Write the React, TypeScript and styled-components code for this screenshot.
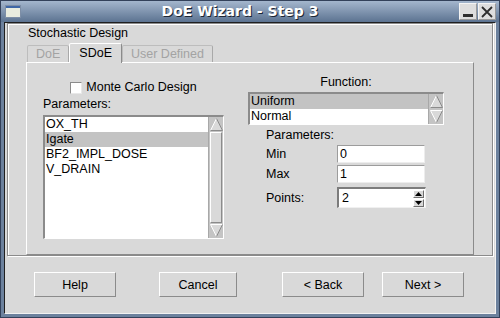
import React from 'react';
import styled, { createGlobalStyle } from 'styled-components';

const palette = {
    face: '#d9d9d9',
    light: '#ffffff',
    shadow: '#8b8b8b',
    dark: '#3a3a3a',
    select: '#c3c3c3',
    disabled: '#a3a3a3',
    trough: '#c4c4c4',
    frame: '#6c819d',
};

const GlobalStyle = createGlobalStyle`
    html,
    body {
        margin: 0;
        padding: 0;
        background: ${palette.frame};
    }

    body {
        font-family: 'Liberation Sans', Arial, sans-serif;
        font-size: 12.5px;
        color: #000;
    }

    * {
        box-sizing: border-box;
    }
`;

const Window = styled.div`
    width: 500px;
    height: 318px;
    display: flex;
    flex-direction: column;
    background: ${palette.frame};
    border: 1px solid #33415a;
`;

const TitleBar = styled.div`
    height: 21px;
    flex: none;
    display: flex;
    align-items: center;
    padding: 0 3px 0 4px;
    background: linear-gradient(#a4b6cd, #5c7391);
`;

const Title = styled.div`
    flex: 1;
    text-align: center;
    font-family: 'DejaVu Sans', sans-serif;
    font-weight: bold;
    font-size: 14px;
    line-height: 17px;
    color: #fff;
    text-shadow: 1px 1px 0 #1d2634;
`;

const WinButton = styled.div<{ $ml?: number }>`
    width: 18px;
    height: 17px;
    margin-left: ${p => p.$ml ?? 0}px;
    background: #dedede;
    border: 1px solid;
    border-color: #f4f4f4 #9a9a9a #9a9a9a #f4f4f4;
    display: flex;
    align-items: center;
    justify-content: center;
`;

const Client = styled.div`
    flex: 1;
    margin: 0 3px 3px;
    background: ${palette.face};
    border: 1px solid;
    border-color: #1f1f1f #f2f2f2 #f2f2f2 #1f1f1f;
    display: flex;
    flex-direction: column;
`;

const Group = styled.div`
    height: 233px;
    margin: 0 2px;
    padding: 2px 18px 0 18px;
    border: 1px solid ${palette.shadow};
    box-shadow: 1px 1px 0 ${palette.light}, inset 1px 1px 0 ${palette.light};
    display: flex;
    flex-direction: column;
`;

const GroupLabel = styled.div`
    line-height: 15px;
    padding-left: 2px;
`;

const TabRow = styled.div`
    height: 21px;
    display: flex;
    align-items: flex-end;
    padding-left: 1px;
`;

const Tab = styled.div<{ $active?: boolean }>`
    position: relative;
    z-index: ${p => (p.$active ? 1 : 0)};
    height: ${p => (p.$active ? 20 : 17)}px;
    margin-bottom: ${p => (p.$active ? -1 : 0)}px;
    padding: ${p => (p.$active ? '2px 9px 0' : '1px 8px 0')};
    line-height: 15px;
    color: ${p => (p.$active ? '#000' : palette.disabled)};
    background: ${palette.face};
    border: 1px solid;
    border-bottom: none;
    border-color: ${p =>
        p.$active
            ? `${palette.light} ${palette.shadow} transparent ${palette.light}`
            : `#bdbdbd #a9a9a9 transparent #bdbdbd`};
    border-radius: 2px 2px 0 0;
`;

const Panel = styled.div`
    flex: 1;
    border: 1px solid;
    border-color: ${palette.light} ${palette.shadow} ${palette.shadow} ${palette.light};
    padding: 12px 0 0 16px;
    display: grid;
    grid-template-columns: 181px 196px;
    column-gap: 24px;
    align-items: start;
`;

const Column = styled.div<{ $top?: number }>`
    display: flex;
    flex-direction: column;
    padding-top: ${p => p.$top ?? 0}px;
`;

const CheckRow = styled.label`
    height: 15px;
    display: flex;
    align-items: center;
    justify-content: center;
    gap: 4px;
    line-height: 15px;
`;

const CheckBox = styled.span`
    width: 12px;
    height: 12px;
    background: #fff;
    border: 1px solid;
    border-color: ${palette.shadow} #e8e8e8 #e8e8e8 ${palette.shadow};
`;

const Label = styled.div<{ $mt?: number; $indent?: number; $center?: boolean }>`
    line-height: 15px;
    margin-top: ${p => p.$mt ?? 0}px;
    padding-left: ${p => p.$indent ?? 0}px;
    text-align: ${p => (p.$center ? 'center' : 'left')};
`;

const ListBox = styled.div<{ $h: number; $mt?: number }>`
    height: ${p => p.$h}px;
    margin-top: ${p => p.$mt ?? 0}px;
    display: flex;
    border-style: solid;
    border-width: 2px 1px 1px 2px;
    border-color: ${palette.shadow} ${palette.light} ${palette.light} ${palette.shadow};
    background: #fff;
`;

const Items = styled.div`
    flex: 1;
    background: #fff;
`;

const Item = styled.div<{ $selected?: boolean }>`
    height: 15px;
    line-height: 15px;
    padding-left: 1px;
    white-space: nowrap;
    background: ${p => (p.$selected ? palette.select : '#fff')};
`;

const ScrollBar = styled.div`
    width: 15px;
    display: flex;
    flex-direction: column;
    background: ${palette.trough};
    border-left: 1px solid #a8a8a8;
`;

const Arrow = styled.div`
    height: 15px;
    flex: none;
    display: flex;
    align-items: center;
    justify-content: center;
`;

const Thumb = styled.div`
    flex: 1;
    margin: 0 1px;
    background: ${palette.face};
    border: 1px solid;
    border-color: ${palette.light} ${palette.shadow} ${palette.shadow} ${palette.light};
`;

const Divider = styled.div`
    height: 1px;
    margin: 0 1px;
    background: ${palette.light};
`;

const Form = styled.div`
    margin-top: 2px;
    padding-left: 18px;
    display: grid;
    grid-template-columns: 71px 89px;
    grid-template-rows: 18px 18px 25px;
    row-gap: 2px;
    align-items: center;
`;

const Field = styled.div`
    width: 88px;
    height: 18px;
    padding-left: 2px;
    line-height: 16px;
    background: #fff;
    border: 1px solid;
    border-color: #9c9c9c #ededed #ededed #9c9c9c;
`;

const Spin = styled.div`
    width: 89px;
    height: 21px;
    display: flex;
    align-items: center;
    background: #fff;
    border-style: solid;
    border-width: 2px 1px 1px 2px;
    border-color: #7c7c7c #f0f0f0 #f0f0f0 #7c7c7c;
`;

const SpinValue = styled.div`
    flex: 1;
    padding-left: 3px;
    line-height: 16px;
`;

const SpinButtons = styled.div`
    width: 11px;
    margin-right: 1px;
    display: flex;
    flex-direction: column;
    gap: 1px;
`;

const SpinButton = styled.div`
    height: 8px;
    display: flex;
    align-items: center;
    justify-content: center;
    background: ${palette.face};
    border: 1px solid;
    border-color: ${palette.light} #6e6e6e #6e6e6e ${palette.light};
`;

const ButtonRow = styled.div`
    display: flex;
    padding: 16px 0 0 29px;
`;

const PushButton = styled.div<{ $w: number; $ml?: number }>`
    width: ${p => p.$w}px;
    height: 25px;
    margin-left: ${p => p.$ml ?? 0}px;
    display: flex;
    align-items: center;
    justify-content: center;
    background: ${palette.face};
    border: 1px solid;
    border-color: ${palette.light} ${palette.shadow} ${palette.shadow} ${palette.light};
`;

// hollow bevelled triangle used by the Motif-like scroll bars
const ScrollArrow = ({ down }: { down?: boolean }) => (
    <svg width="13" height="13" viewBox="0 0 13 13">
        {down ? (
            <>
                <polygon points="0.5,0.5 12.5,0.5 6.5,12.5" fill={palette.face} />
                <line x1="0.5" y1="0.5" x2="12.5" y2="0.5" stroke={palette.light} />
                <line x1="0.5" y1="0.5" x2="6.5" y2="12.5" stroke={palette.light} />
                <line x1="12.5" y1="0.5" x2="6.5" y2="12.5" stroke={palette.shadow} />
            </>
        ) : (
            <>
                <polygon points="6.5,0.5 12.5,12.5 0.5,12.5" fill={palette.face} />
                <line x1="6.5" y1="0.5" x2="0.5" y2="12.5" stroke={palette.light} />
                <line x1="6.5" y1="0.5" x2="12.5" y2="12.5" stroke={palette.shadow} />
                <line x1="0.5" y1="12.5" x2="12.5" y2="12.5" stroke={palette.shadow} />
            </>
        )}
    </svg>
);

const SpinArrow = ({ down }: { down?: boolean }) => (
    <svg width="7" height="4" viewBox="0 0 7 4">
        <polygon points={down ? '0,0 7,0 3.5,4' : '3.5,0 7,4 0,4'} fill="#000" />
    </svg>
);

const parameters = ['OX_TH', 'Igate', 'BF2_IMPL_DOSE', 'V_DRAIN'];
const functions = ['Uniform', 'Normal'];

const App: React.FC = () => {
    return (
        <>
            <GlobalStyle />
            <Window>
                <TitleBar>
                    <svg width="16" height="13" viewBox="0 0 16 13">
                        <rect x="0.5" y="0.5" width="15" height="12" fill="#e9ecdf" stroke="#7d8ea6" />
                        <rect x="1" y="1" width="14" height="2" fill="#3f67a6" />
                    </svg>
                    <Title>DoE Wizard - Step 3</Title>
                    <WinButton>
                        <svg width="10" height="12" viewBox="0 0 10 12">
                            <rect x="0" y="8" width="10" height="3" fill="#2e2e2e" />
                        </svg>
                    </WinButton>
                    <WinButton $ml={1}>
                        <svg width="12" height="12" viewBox="0 0 12 12">
                            <path d="M1 1 L11 11 M11 1 L1 11" stroke="#2e2e2e" strokeWidth="1.8" />
                        </svg>
                    </WinButton>
                </TitleBar>
                <Client>
                    <Group>
                        <GroupLabel>Stochastic Design</GroupLabel>
                        <TabRow>
                            <Tab>DoE</Tab>
                            <Tab $active>SDoE</Tab>
                            <Tab>User Defined</Tab>
                        </TabRow>
                        <Panel>
                            <Column $top={5}>
                                <CheckRow>
                                    <CheckBox />
                                    Monte Carlo Design
                                </CheckRow>
                                <Label $mt={2}>Parameters:</Label>
                                <ListBox $h={124} $mt={3}>
                                    <Items>
                                        {parameters.map(name => (
                                            <Item key={name} $selected={name === 'Igate'}>
                                                {name}
                                            </Item>
                                        ))}
                                    </Items>
                                    <ScrollBar>
                                        <Arrow>
                                            <ScrollArrow />
                                        </Arrow>
                                        <Thumb />
                                        <Arrow>
                                            <ScrollArrow down />
                                        </Arrow>
                                    </ScrollBar>
                                </ListBox>
                            </Column>
                            <Column>
                                <Label $center>Function:</Label>
                                <ListBox $h={33} $mt={2}>
                                    <Items>
                                        {functions.map(name => (
                                            <Item key={name} $selected={name === 'Uniform'}>
                                                {name}
                                            </Item>
                                        ))}
                                    </Items>
                                    <ScrollBar>
                                        <Arrow>
                                            <ScrollArrow />
                                        </Arrow>
                                        <Divider />
                                        <Arrow>
                                            <ScrollArrow down />
                                        </Arrow>
                                    </ScrollBar>
                                </ListBox>
                                <Label $mt={3} $indent={18}>
                                    Parameters:
                                </Label>
                                <Form>
                                    <span>Min</span>
                                    <Field>0</Field>
                                    <span>Max</span>
                                    <Field>1</Field>
                                    <span>Points:</span>
                                    <Spin>
                                        <SpinValue>2</SpinValue>
                                        <SpinButtons>
                                            <SpinButton>
                                                <SpinArrow />
                                            </SpinButton>
                                            <SpinButton>
                                                <SpinArrow down />
                                            </SpinButton>
                                        </SpinButtons>
                                    </Spin>
                                </Form>
                            </Column>
                        </Panel>
                    </Group>
                    <ButtonRow>
                        <PushButton $w={82}>Help</PushButton>
                        <PushButton $w={78} $ml={43}>
                            Cancel
                        </PushButton>
                        <PushButton $w={82} $ml={45}>
                            &lt; Back
                        </PushButton>
                        <PushButton $w={82} $ml={18}>
                            Next &gt;
                        </PushButton>
                    </ButtonRow>
                </Client>
            </Window>
        </>
    );
};

export default App;
